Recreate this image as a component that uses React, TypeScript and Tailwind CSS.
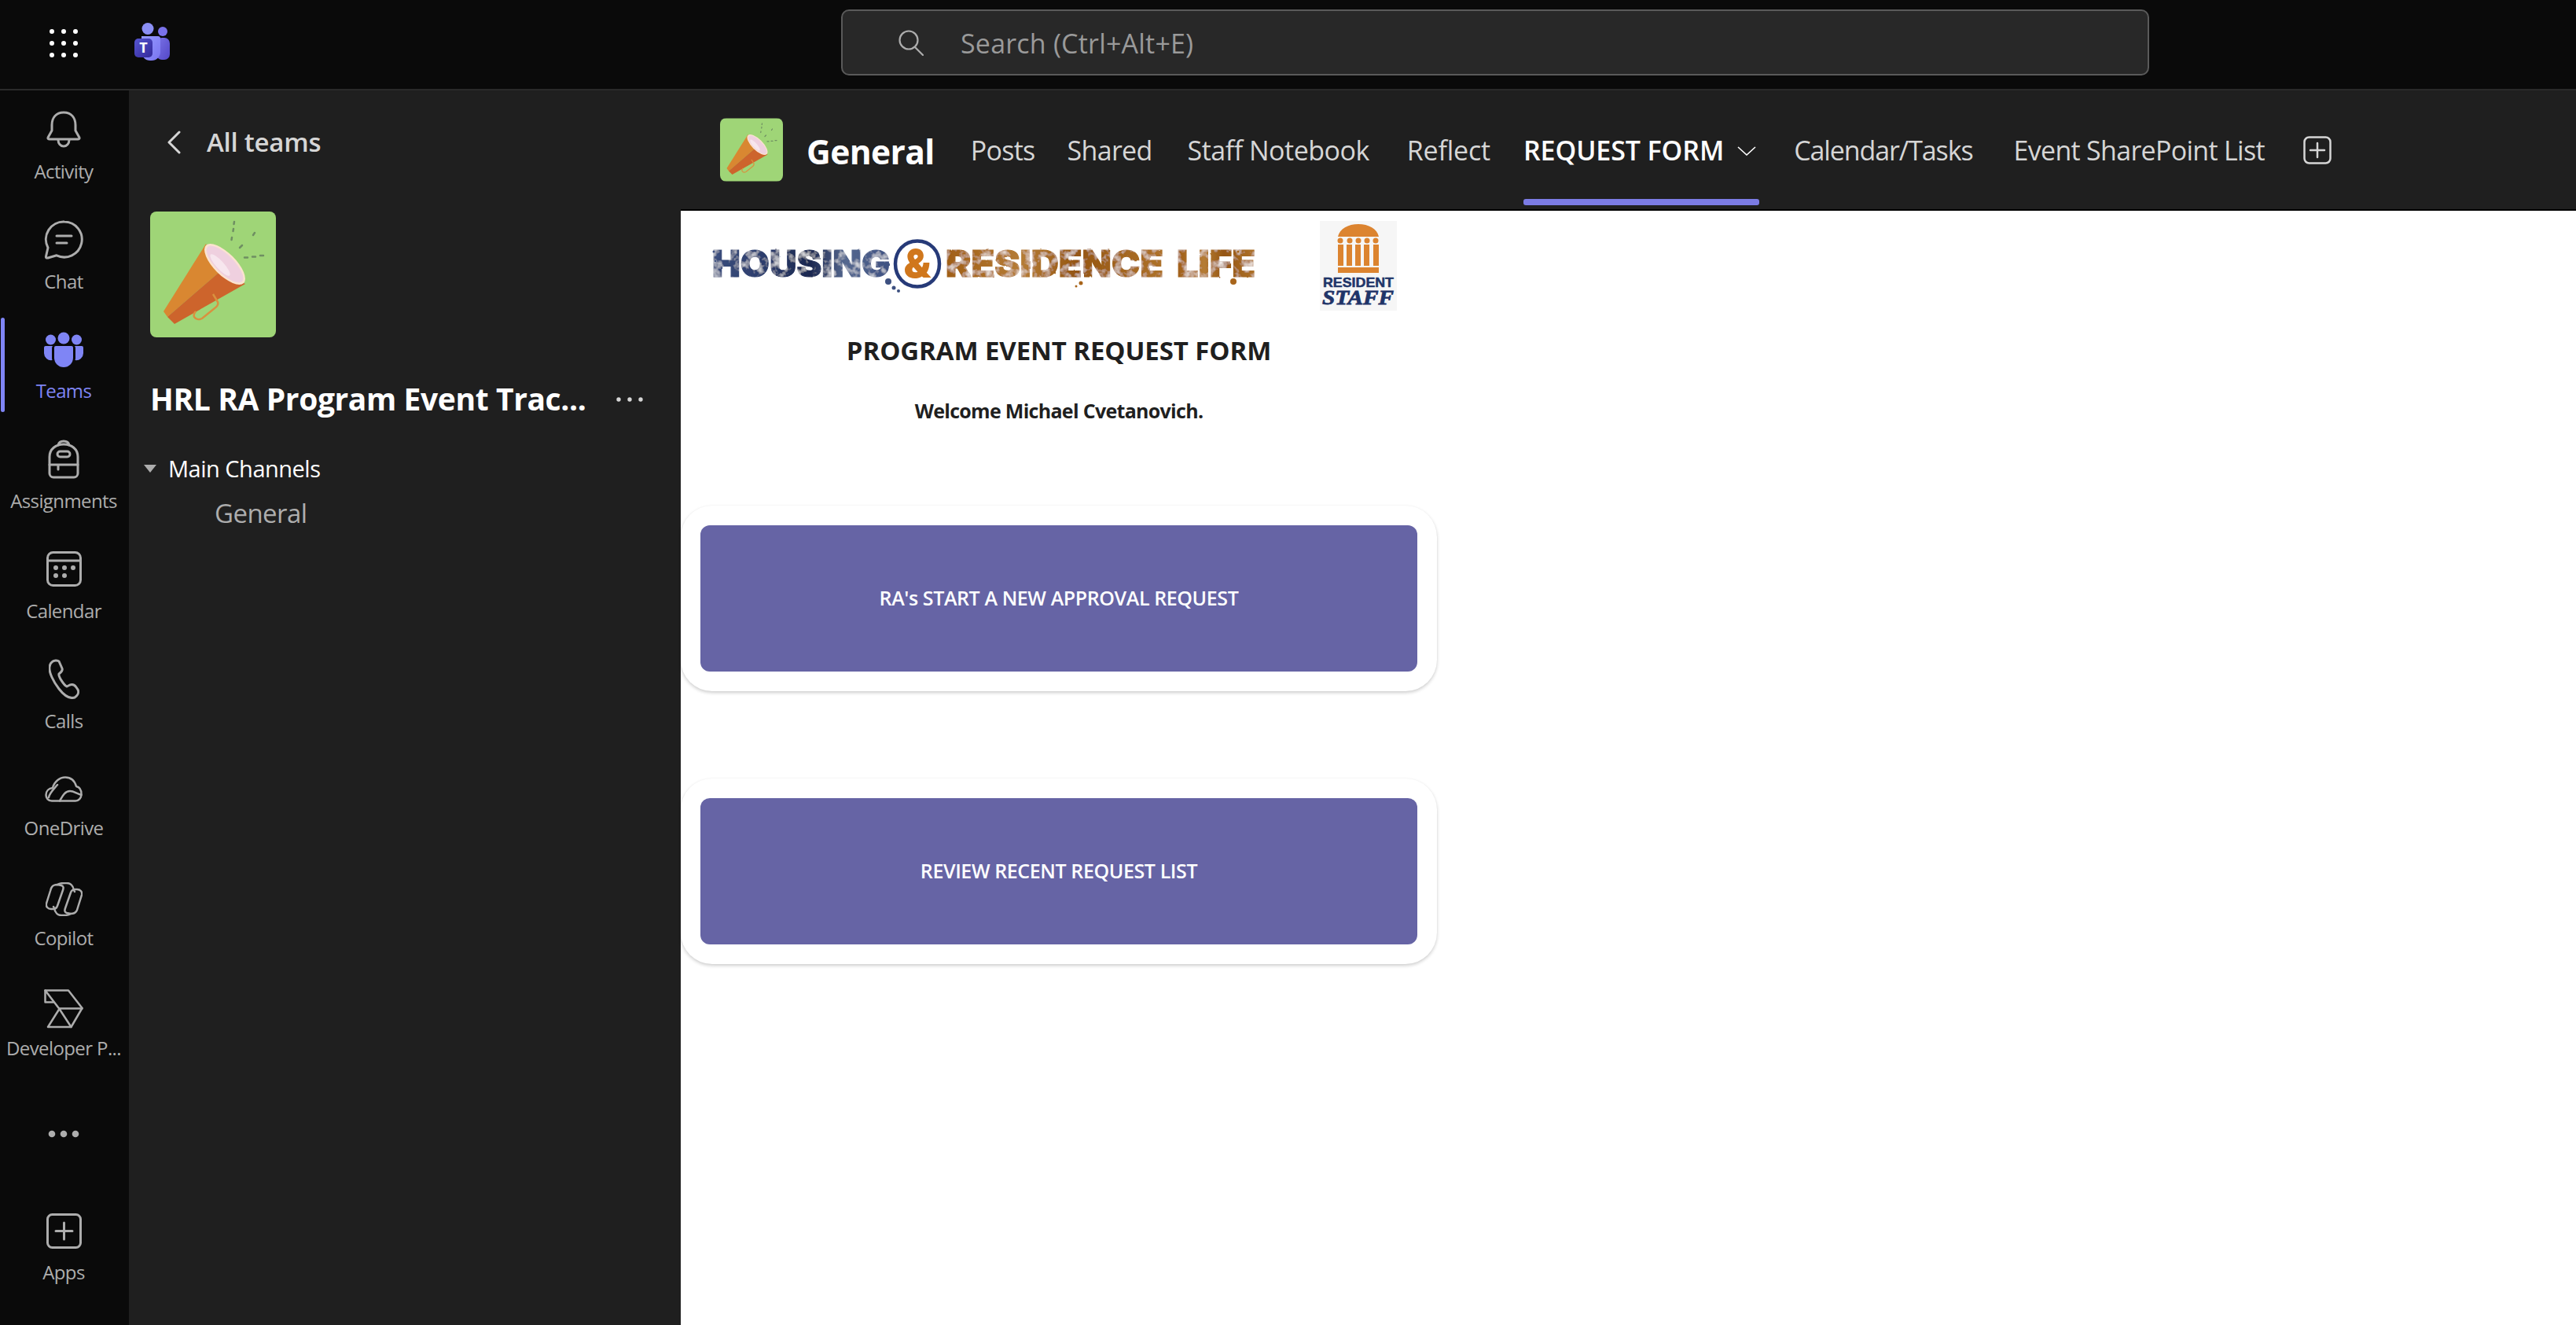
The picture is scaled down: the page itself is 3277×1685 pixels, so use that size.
import type { ReactNode } from "react"

function Megaphone({ className }: { className: string }) {
  return (
    <svg viewBox="0 0 160 160" className={className}>
      <rect width="160" height="160" fill="#9fd577" />
      <g stroke="#6f8f62" strokeWidth="2.500" strokeLinecap="round">
        <path d="M107 13l-.5 3M106 22l-.5 3M104 33l-.5 3M133 27l-2 3M117 43l-3 3M120 58.500h4M130 57.500h4M140 56h4" />
      </g>
      <path d="M71 41 17 127l5 7 66-57z" fill="#d98731" />
      <path d="M22 134l9 9 90-51-33-15z" fill="#cd642c" />
      <path d="M80 105l6 10c1 3-1 6-4 8l-16 13c-4 2-8 1-10-2-1-3 0-5 2-7" fill="none" stroke="#d9913f" strokeWidth="2.500" />
      <ellipse cx="95" cy="67" rx="34" ry="14" transform="rotate(45 95 67)" fill="#fbe3cf" />
      <ellipse cx="95" cy="67" rx="31" ry="11.500" transform="rotate(45 95 67)" fill="#efd0df" />
      <ellipse cx="89" cy="68" rx="18" ry="5" transform="rotate(48 89 68)" fill="#f7e6ee" />
    </svg>
  )
}

function TeamsLogo() {
  return (
    <svg viewBox="0 0 45 48" className="h-[48px] w-[45px]">
      <defs>
        <linearGradient id="tl-a" x1="0" y1="0" x2="1" y2="1">
          <stop offset="0" stopColor="#959bff" />
          <stop offset="1" stopColor="#7a74f0" />
        </linearGradient>
        <linearGradient id="tl-b" x1="0" y1="0" x2="1" y2="1">
          <stop offset="0" stopColor="#7a72e6" />
          <stop offset="1" stopColor="#5348c8" />
        </linearGradient>
        <linearGradient id="tl-c" x1="0" y1="0" x2="1" y2="1">
          <stop offset="0" stopColor="#5655d0" />
          <stop offset="1" stopColor="#33299a" />
        </linearGradient>
      </defs>
      <circle cx="17" cy="7.500" r="7.500" fill="#8b8ff5" />
      <circle cx="36" cy="11" r="6" fill="#7a72ea" />
      <rect x="28" y="19" width="17" height="28" rx="7" fill="url(#tl-b)" />
      <path d="M9 17h21a3 3 0 0 1 3 3v17a11 11 0 0 1-11 11h-2A11 11 0 0 1 9 37z" fill="url(#tl-a)" />
      <rect x="0" y="20" width="23" height="24" rx="5" fill="url(#tl-c)" />
      <text x="11.500" y="38" textAnchor="middle" fill="#fff" className="font-['Open_Sans',sans-serif] text-[18px] font-bold">
        T
      </text>
    </svg>
  )
}

const line = { fill: "none", stroke: "currentColor", strokeWidth: 3, strokeLinecap: "round", strokeLinejoin: "round" } as const

const railItems: { label: string; icon: ReactNode; active?: boolean; tight?: boolean }[] = [
  {
    label: "Activity",
    icon: (
      <svg viewBox="0 0 44 48" className="h-[48px] w-[44px]" {...line}>
        <path d="M22 2C12 2 7 9 7 18v7L2 34q-.5 2 2 2h36q2.500 0 2-2l-5-9v-7C37 9 32 2 22 2z" />
        <path d="M15 37a7 8 0 0 0 14 0" />
      </svg>
    ),
  },
  {
    label: "Chat",
    icon: (
      <svg viewBox="0 0 50 50" className="h-[50px] w-[50px]" {...line}>
        <path d="M26 2a22.500 22.500 0 1 1-10 42.800L5 48q-3 .5-2.500-2L5 35A22.500 22.500 0 0 1 26 2z" />
        <path d="M16 20h19M16 29h13" />
      </svg>
    ),
  },
  {
    label: "Teams",
    active: true,
    icon: (
      <svg viewBox="0 0 50 45" className="h-[45px] w-[50px]" fill="#7f85f5">
        <circle cx="25" cy="8" r="7.500" />
        <circle cx="8.500" cy="10" r="6.500" />
        <circle cx="41.500" cy="10" r="6.500" />
        <path d="M13 20a2 2 0 0 1 2-2h20a2 2 0 0 1 2 2v13a12 12 0 0 1-24 0z" />
        <path d="M2 18h9q-1 1-1 3v12q0 2 .5 3A9 9 0 0 1 0 27v-7a2 2 0 0 1 2-2z" />
        <path d="M48 18h-9q1 1 1 3v12q0 2-.5 3A9 9 0 0 0 50 27v-7a2 2 0 0 0-2-2z" />
      </svg>
    ),
  },
  {
    label: "Assignments",
    icon: (
      <svg viewBox="0 0 40 50" className="h-[50px] w-[40px]" {...line}>
        <path d="M13 7q1-5 7-5t7 5" />
        <path d="M2 22C2 12 10 6 20 6s18 6 18 16v21a5 5 0 0 1-5 5H7a5 5 0 0 1-5-5z" />
        <path d="M2 32h36M13 32v6" />
        <rect x="12" y="15" width="16" height="7" rx="3.500" />
      </svg>
    ),
  },
  {
    label: "Calendar",
    icon: (
      <svg viewBox="0 0 45 45" className="h-[45px] w-[45px]" {...line}>
        <rect x="1.500" y="1.500" width="42" height="42" rx="7" />
        <path d="M2 12h41" />
        <g fill="currentColor" stroke="none">
          <circle cx="12" cy="21" r="3" />
          <circle cx="23" cy="21" r="3" />
          <circle cx="34" cy="21" r="3" />
          <circle cx="12" cy="31" r="3" />
          <circle cx="23" cy="31" r="3" />
        </g>
      </svg>
    ),
  },
  {
    label: "Calls",
    icon: (
      <svg viewBox="0 0 39 51" className="h-[51px] w-[39px]" {...line}>
        <path d="M4 4c2-2 7-3 9-1l4 9c1 3-1 5-4 7-1 3 6 14 10 16l4-2c3-1 6 0 8 3l2 3c2 4-1 8-4 10-6 2-13-2-20-11C6 29 0 17 1 10c.5-3 1.500-5 3-6z" />
      </svg>
    ),
  },
  {
    label: "OneDrive",
    tight: true,
    icon: (
      <svg viewBox="0 0 48 33" className="h-[33px] w-[48px]" {...line} strokeWidth={2.5}>
        <path d="M9 31.500C4 31.500 1.500 27.500 1.500 24 1.500 19 5 15.500 10 15c2-8 9-13.500 16-13.500 7 0 12 4.500 14 11.500 4.500 1 6.500 5.500 6.500 10 0 5-3.500 8.500-7.500 8.500z" />
        <path d="M19 31.500c3-5 6-12.500 13-12.500 5 0 8 3 14.500 5M5 27c1-6 7-11 11-16" />
      </svg>
    ),
  },
  {
    label: "Copilot",
    tight: true,
    icon: (
      <svg viewBox="0 0 47 43" className="h-[43px] w-[47px]" {...line} strokeWidth={2.5}>
        <g>
          <path d="M8 6c2-3 4-3 7-3l5 1c3 1 3 3 2 6l-7 20c-1 3-3 4-6 4H7c-4 0-7-3-6-7l5-16c.5-2 1-4 2-5z" />
          <path d="M15 3c3-2 5-2 9-2h3c4 0 8 3 9 9l1 2" />
        </g>
        <g transform="rotate(180 23.500 21.500)">
          <path d="M8 6c2-3 4-3 7-3l5 1c3 1 3 3 2 6l-7 20c-1 3-3 4-6 4H7c-4 0-7-3-6-7l5-16c.5-2 1-4 2-5z" />
          <path d="M15 3c3-2 5-2 9-2h3c4 0 8 3 9 9l1 2" />
        </g>
      </svg>
    ),
  },
  {
    label: "Developer P...",
    tight: true,
    icon: (
      <svg viewBox="0 0 50 50" className="h-[50px] w-[50px]" {...line} strokeWidth={2.5}>
        <path d="M1.500 1.500H31L48.500 24 34.500 48H5L19.500 25z" />
        <path d="M1.500 1.500v15H12M19.500 24.500h29M19.500 25l15 23" />
      </svg>
    ),
  },
]

function RailButton({ label, icon, active, tight }: { label: string; icon: ReactNode; active?: boolean; tight?: boolean }) {
  return (
    <div className={`relative flex h-[140px] flex-col items-center pt-[25px] ${active ? "text-[#7f85f5]" : "text-[#adadad]"}`}>
      {active && <div className="absolute top-[10px] left-[1px] h-[120px] w-[5px] rounded-full bg-[#7f85f5]" />}
      <div className="flex h-[50px] items-center justify-center">{icon}</div>
      <div className={`h-[30px] whitespace-nowrap text-[24px] leading-[30px] tracking-[-0.6px] ${tight ? "mt-[10px]" : "mt-[13px]"}`}>{label}</div>
    </div>
  )
}

function Rail() {
  return (
    <aside className="flex w-[164px] shrink-0 flex-col bg-[#0a0a0a] pr-[2px] pb-[30px]">
      {railItems.map((item) => (
        <RailButton key={item.label} {...item} />
      ))}
      <div className="mt-auto mb-[3px] flex h-[140px] items-center justify-center text-[#adadad]">
        <svg viewBox="0 0 40 10" className="h-[10px] w-[40px]" fill="currentColor">
          <circle cx="5" cy="5" r="4.300" />
          <circle cx="20" cy="5" r="4.300" />
          <circle cx="35" cy="5" r="4.300" />
        </svg>
      </div>
      <RailButton
        label="Apps"
        icon={
          <svg viewBox="0 0 45 45" className="h-[45px] w-[45px]" {...line}>
            <rect x="1.500" y="1.500" width="42" height="42" rx="6" />
            <path d="M22.500 12v21M12 22.500h21" />
          </svg>
        }
      />
    </aside>
  )
}

function TeamPanel() {
  return (
    <aside className="flex w-[702px] shrink-0 flex-col bg-[#1f1f1f] pl-[27px]">
      <div className="mt-[36px] flex h-[60px] items-center">
        <svg viewBox="0 0 19 30" className="ml-[21px] h-[30px] w-[19px] text-[#d6d6d6]" {...line}>
          <path d="M16 2 3 15l13 13" />
        </svg>
        <span className="ml-[32px] text-[33px] font-semibold tracking-[-0.25px] text-[#d6d6d6]">All teams</span>
      </div>
      <Megaphone className="mt-[58px] h-[160px] w-[160px] rounded-[8px]" />
      <div className="mt-[48px] flex h-[60px] items-center">
        <h2 className="w-[593px] text-[39px] font-bold tracking-[-0.4px] whitespace-nowrap text-white">HRL RA Program Event Trac...</h2>
        <svg viewBox="0 0 34 6" className="mt-[2px] h-[6px] w-[34px]" fill="#d6d6d6">
          <circle cx="3" cy="3" r="2.700" />
          <circle cx="17" cy="3" r="2.700" />
          <circle cx="31" cy="3" r="2.700" />
        </svg>
      </div>
      <div className="mt-[39px] flex h-[40px] items-center">
        <div className="-ml-[8px] h-0 w-0 border-x-[8px] border-t-[10px] border-x-transparent border-t-[#adadad]" />
        <span className="ml-[15px] text-[29px] tracking-[-0.5px] text-white">Main Channels</span>
      </div>
      <div className="mt-[15px] flex h-[44px] items-center pl-[82px] text-[33px] tracking-[-0.55px] text-[#adadad]">General</div>
    </aside>
  )
}

function TabBar() {
  return (
    <header className="flex h-[153px] shrink-0 items-center border-b-2 border-black bg-[#1f1f1f] pl-[50px]">
      <Megaphone className="h-[81px] w-[80px] rounded-[8px]" />
      <h1 className="mt-[4px] ml-[30px] text-[42.500px] font-bold tracking-[-0.6px] text-white">General</h1>
      <nav className="ml-[46px] flex h-full items-center gap-[45px] text-[34px] tracking-[-0.7px] text-[#d6d6d6]">
        <span className="mt-[2px]">Posts</span>
        <span className="mt-[2px] -ml-[4px]">Shared</span>
        <span className="mt-[2px] tracking-[-0.5px]">Staff Notebook</span>
        <span className="mt-[2px] ml-[3px] tracking-[-0.2px]">Reflect</span>
        <div className="relative -ml-[3px] flex h-full items-center font-semibold tracking-[-0.1px] text-white">
          <span className="mt-[2px]">REQUEST FORM</span>
          <svg viewBox="0 0 24 12" className="mt-[2px] ml-[17px] h-[12px] w-[24px]" fill="none" stroke="#fff" strokeWidth="1.600">
            <path d="M1 1l11 10L23 1" />
          </svg>
          <div className="absolute bottom-[5px] left-0 h-[8px] w-[300px] rounded-[3px] bg-[#7b7be4]" />
        </div>
        <span className="mt-[2px] ml-[3px] tracking-[-1.100px]">Calendar/Tasks</span>
        <span className="mt-[2px] ml-[7px]">Event SharePoint List</span>
        <svg viewBox="0 0 36 36" className="ml-[4px] h-[36px] w-[36px]" fill="none" stroke="#d6d6d6" strokeWidth="2.500" strokeLinecap="round">
          <rect x="1.500" y="1.500" width="33" height="33" rx="6" />
          <path d="M18 9v18M9 18h18" />
        </svg>
      </nav>
    </header>
  )
}

function HousingLogo() {
  return (
    <svg viewBox="0 0 692 80" className="h-[80px] w-[692px] shrink-0 font-['Inter',sans-serif] font-black">
      <defs>
        <linearGradient id="hl-blue" x1="0" y1="0" x2="1" y2="0">
          <stop offset="0" stopColor="#3a4d7c" />
          <stop offset="0.3" stopColor="#2c3d6c" />
          <stop offset="0.55" stopColor="#1c2850" />
          <stop offset="0.75" stopColor="#55688f" />
          <stop offset="1" stopColor="#3e5182" />
        </linearGradient>
        <linearGradient id="hl-brown" x1="0" y1="0" x2="1" y2="0">
          <stop offset="0" stopColor="#a05f17" />
          <stop offset="0.35" stopColor="#b57c36" />
          <stop offset="0.6" stopColor="#955612" />
          <stop offset="1" stopColor="#ae722a" />
        </linearGradient>
        <filter id="hl-grunge" x="-5%" y="-20%" width="110%" height="140%">
          <feTurbulence type="fractalNoise" baseFrequency="0.09" numOctaves="3" seed="7" result="n" />
          <feDisplacementMap in="SourceGraphic" in2="n" scale="2" result="d" />
          <feColorMatrix in="n" type="matrix" values="0 0 0 0 1  0 0 0 0 1  0 0 0 0 1  1.800 0 0 0 -0.850" result="spots" />
          <feComposite in="spots" in2="d" operator="in" result="clipped" />
          <feMerge>
            <feMergeNode in="d" />
            <feMergeNode in="clipped" />
          </feMerge>
        </filter>
      </defs>
      <g filter="url(#hl-grunge)" strokeWidth="1.200">
        <text x="1" y="54" fontSize="47" textLength="226" lengthAdjust="spacingAndGlyphs" fill="url(#hl-blue)" stroke="url(#hl-blue)">
          HOUSING
        </text>
        <text x="298" y="54" fontSize="47" textLength="277" lengthAdjust="spacingAndGlyphs" fill="url(#hl-brown)" stroke="url(#hl-brown)">
          RESIDENCE
        </text>
        <text x="592" y="54" fontSize="47" textLength="100" lengthAdjust="spacingAndGlyphs" fill="url(#hl-brown)" stroke="url(#hl-brown)">
          LIFE
        </text>
      </g>
      <g fill="#3d5080">
        <circle cx="3" cy="22" r="1.500" />
        <circle cx="8" cy="28" r="2" />
        <circle cx="5" cy="34" r="1.200" />
        <circle cx="225" cy="60" r="4" />
        <circle cx="232" cy="68" r="2.500" />
        <circle cx="238" cy="72" r="2" />
      </g>
      <g fill="#a8651b">
        <circle cx="470" cy="62" r="2.500" />
        <circle cx="464" cy="66" r="1.500" />
        <circle cx="504" cy="24" r="1.500" />
        <circle cx="664" cy="60" r="4" />
        <circle cx="670" cy="22" r="1.500" />
      </g>
      <path d="M262 8.500c17 0 28 13 28 29 0 17-12 29-28 29-17 0-28-13-28-29 0-16 11-29 28-29z" fill="none" stroke="#263a78" strokeWidth="4.500" />
      <text x="262" y="55" textAnchor="middle" fontSize="50" fill="#d0771c">
        &amp;
      </text>
    </svg>
  )
}

function ResidentLogo() {
  return (
    <svg viewBox="0 0 98 114" className="ml-[82px] h-[114px] w-[98px] shrink-0">
      <rect width="98" height="114" fill="#f6f6f6" />
      <g fill="#dc8430">
        <path d="M23 20C25 10 36 4 49 4s24 6 26 16z" />
        <circle cx="26" cy="25" r="3.500" />
        <circle cx="38" cy="25" r="3.500" />
        <circle cx="49" cy="25" r="3.500" />
        <circle cx="60" cy="25" r="3.500" />
        <circle cx="71" cy="25" r="3.500" />
        <rect x="23" y="30" width="7" height="27" />
        <rect x="34" y="30" width="7" height="27" />
        <rect x="45" y="30" width="7" height="27" />
        <rect x="56" y="30" width="7" height="27" />
        <rect x="68" y="30" width="7" height="27" />
        <rect x="23" y="59" width="52" height="7" />
      </g>
      <text x="4" y="84" fontSize="17" textLength="90" lengthAdjust="spacingAndGlyphs" fill="#1f3468" stroke="#1f3468" strokeWidth="0.500" className="font-['Liberation_Sans',sans-serif] font-bold">
        RESIDENT
      </text>
      <text x="3" y="106" fontSize="26" textLength="91" lengthAdjust="spacingAndGlyphs" fill="#1f3468" stroke="#1f3468" strokeWidth="0.800" className="font-['Liberation_Serif',serif] font-bold italic">
        STAFF
      </text>
    </svg>
  )
}

function RequestCard({ label }: { label: string }) {
  return (
    <div className="h-[236px] rounded-[40px] bg-white p-[25px] shadow-[0_2px_4px_rgba(0,0,0,0.2),0_0_2px_rgba(0,0,0,0.02)]">
      <button className="flex h-full w-full items-center justify-center rounded-[12px] bg-[#6664a5] text-[25px] font-semibold tracking-[-0.4px] text-white">
        {label}
      </button>
    </div>
  )
}

function RequestForm() {
  return (
    <main className="min-h-0 flex-1 bg-white">
      <div className="flex w-[962px] flex-col">
        <div className="flex items-center pt-[13px] pl-[39px]">
          <HousingLogo />
          <ResidentLogo />
        </div>
        <h3 className="mt-[29px] text-center text-[33px] leading-[44px] font-bold tracking-[-0.1px] text-[#1f1f1f]">PROGRAM EVENT REQUEST FORM</h3>
        <p className="mt-[37px] text-center text-[25px] leading-[34px] font-bold tracking-[-0.7px] text-[#1f1f1f]">Welcome Michael Cvetanovich.</p>
        <div className="mt-[104px] flex flex-col gap-[111px]">
          <RequestCard label="RA's START A NEW APPROVAL REQUEST" />
          <RequestCard label="REVIEW RECENT REQUEST LIST" />
        </div>
      </div>
    </main>
  )
}

export default function App() {
  return (
    <div className="flex h-[1685px] w-[3277px] flex-col overflow-hidden bg-[#0a0a0a] font-['Open_Sans',sans-serif]">
      {/* Top bar */}
      <div className="flex h-[115px] shrink-0 items-center border-b-2 border-[#2a2a2a] pb-[3px] pl-[63px]">
        <svg viewBox="0 0 36 36" className="h-[36px] w-[36px]" fill="#fff">
          {[3, 18, 33].map((y) => [3, 18, 33].map((x) => <circle key={`${x}-${y}`} cx={x} cy={y} r="3" />))}
        </svg>
        <div className="mb-[4px] ml-[72px] flex">
          <TeamsLogo />
        </div>
        <div className="mb-[2px] ml-[854px] flex h-[84px] w-[1664px] items-center rounded-[10px] border-2 border-[#5a5a5a] bg-[#282828] pl-[71px]">
          <svg viewBox="0 0 32 33" className="h-[33px] w-[32px]" fill="none" stroke="#adadad" strokeWidth="2.200" strokeLinecap="round">
            <circle cx="13" cy="13" r="11.500" />
            <path d="M21 22l10 10" />
          </svg>
          <span className="mt-[2px] ml-[47px] text-[34px] tracking-[0.2px] text-[#9a9a9a]">Search (Ctrl+Alt+E)</span>
        </div>
      </div>

      <div className="flex min-h-0 flex-1">
        <Rail />
        <TeamPanel />
        <div className="flex min-w-0 flex-1 flex-col">
          <TabBar />
          <RequestForm />
        </div>
      </div>
    </div>
  )
}
